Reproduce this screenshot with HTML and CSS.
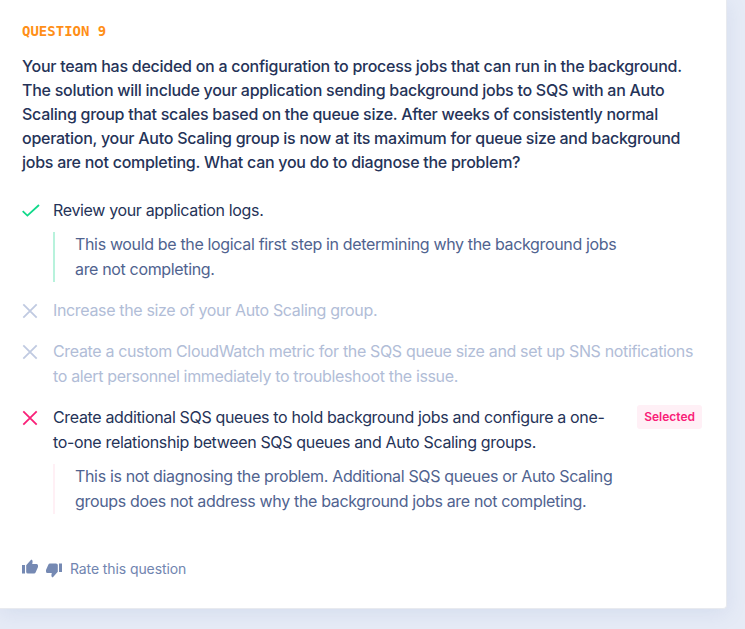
FILE: index.html
```html
<!DOCTYPE html>
<html lang="en">
<head>
<meta charset="utf-8">
<title>Question 9</title>
<link rel="stylesheet" href="styles.css">
</head>
<body>
<main class="card">
  <h1 class="label">QUESTION 9</h1>
  <p class="question">Your team has decided on a configuration to process jobs that can run in the background.<br>The solution will include your application sending background jobs to SQS with an Auto<br>Scaling group that scales based on the queue size. After weeks of consistently normal<br>operation, your Auto Scaling group is now at its maximum for queue size and background<br>jobs are not completing. What can you do to diagnose the problem?</p>
  <ul class="answers">
    <li class="answer correct">
      <svg class="mark" viewBox="0 0 18 18"><path d="M.7 9.2L5.4 13.6L17 3"/></svg>
      <div class="body">
        <p>Review your application logs.</p>
        <blockquote>This would be the logical first step in determining why the background jobs<br>are not completing.</blockquote>
      </div>
    </li>
    <li class="answer muted">
      <svg class="mark" viewBox="0 0 18 18"><path d="M1.3 2.3L14.7 15.7M14.7 2.3L1.3 15.7"/></svg>
      <div class="body"><p>Increase the size of your Auto Scaling group.</p></div>
    </li>
    <li class="answer muted">
      <svg class="mark" viewBox="0 0 18 18"><path d="M1.3 2.3L14.7 15.7M14.7 2.3L1.3 15.7"/></svg>
      <div class="body"><p>Create a custom CloudWatch metric for the SQS queue size and set up SNS notifications<br>to alert personnel immediately to troubleshoot the issue.</p></div>
    </li>
    <li class="answer wrong">
      <svg class="mark" viewBox="0 0 18 18"><path d="M1.3 2.3L14.7 15.7M14.7 2.3L1.3 15.7"/></svg>
      <div class="body">
        <p>Create additional SQS queues to hold background jobs and configure a one-<br>to-one relationship between SQS queues and Auto Scaling groups.</p>
        <blockquote>This is not diagnosing the problem. Additional SQS queues or Auto Scaling<br>groups does not address why the background jobs are not completing.</blockquote>
      </div>
      <span class="badge">Selected</span>
    </li>
  </ul>
  <footer class="rate">
    <svg class="thumb" viewBox="0 0 16 16"><path d="M0 6H3V14.5H0ZM4.2 6.2L9.3 .5Q11 1.2 10.6 3L10.2 5H14.6Q16 5 16 6.5V8L13.7 13.3Q13.2 14.5 12 14.5H6Q4.2 14.5 4.2 13Z"/></svg>
    <svg class="thumb down" viewBox="0 0 16 16"><path d="M0 6H3V14.5H0ZM4.2 6.2L9.3 .5Q11 1.2 10.6 3L10.2 5H14.6Q16 5 16 6.5V8L13.7 13.3Q13.2 14.5 12 14.5H6Q4.2 14.5 4.2 13Z"/></svg>
    <span>Rate this question</span>
  </footer>
</main>
</body>
</html>
```
FILE: styles.css
```css
* { box-sizing: border-box; }
body { margin: 0; height: 629px; overflow: hidden; background: #e6ebf6; font: 16px/25px Inter, sans-serif; color: #253358; letter-spacing: -0.345px; }
p, ul, blockquote, h1 { margin: 0; padding: 0; }
.card { width: 727px; height: 609px; padding: 19px 24px 0 22px; background: #fff; border: solid #e8eaef; border-width: 0 1px 1px 0; border-radius: 0 0 4px 0; box-shadow: 0 4px 20px rgba(90, 120, 185, .13); }
.label { font: bold 14px/24px "DejaVu Sans Mono", monospace; letter-spacing: 0; color: #ff8f17; }
.question { margin-top: 11px; font-weight: 500; line-height: 24px; letter-spacing: -0.265px; white-space: nowrap; }
.answers { list-style: none; margin-top: 24px; display: flex; flex-direction: column; gap: 16px; }
.answer { display: flex; white-space: nowrap; }
.mark { flex: none; width: 18px; height: 18px; margin: 4px 13px 0 0; fill: none; stroke: #c0cae1; stroke-width: 1.8; }
.body { flex: 1; min-width: 0; }
.muted { color: #b1bdd7; }
.correct .mark { stroke: #10d98a; }
.wrong .mark { stroke: #f92078; }
blockquote { margin-top: 9px; padding-left: 20px; border-left: 2px solid #b8f2dc; color: #50638f; }
.wrong blockquote { border-color: #fff0f5; }
.badge { height: 24px; padding: 0 7px; border-radius: 3px; background: #fff0f6; color: #f92078; font-size: 12px; font-weight: 600; line-height: 24px; letter-spacing: 0; }
.rate { margin-top: 42px; display: flex; align-items: center; font-size: 14px; letter-spacing: -.1px; color: #7185b0; }
.thumb { width: 16px; height: 16px; fill: #7589b3; margin-right: 8px; margin-top: -4px; }
.down { transform: rotate(180deg); margin-top: 2px; }
```
